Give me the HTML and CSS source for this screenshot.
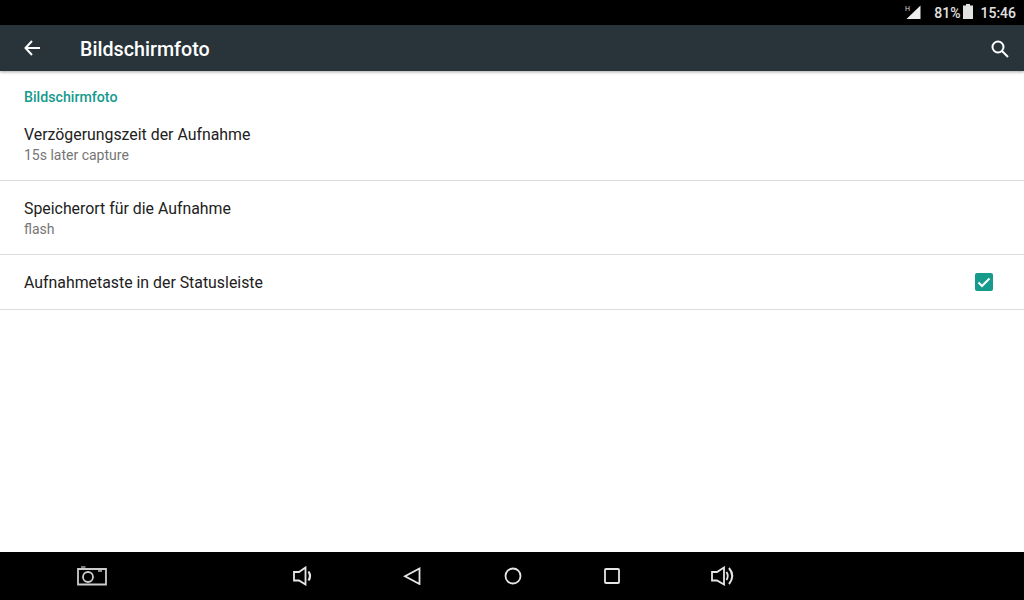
FILE: index.html
```html
<!DOCTYPE html>
<html lang="de">
<head>
<meta charset="utf-8">
<title>Bildschirmfoto</title>
<link rel="stylesheet" href="styles.css">
</head>
<body>
<div class="screen">
  <div class="statusbar">
    <svg class="sb-signal" width="18" height="16" viewBox="0 0 18 16">
      <text x="0" y="6.500" class="sb-h">H</text>
      <path d="M1.500 15 L15.500 1.500 V15 Z" fill="#eee"/>
    </svg>
    <span class="sb-text sb-pct">81%</span>
    <svg class="sb-batt" width="10" height="15" viewBox="0 0 10 15">
      <path d="M3 0h4v1.500h3V15H0V1.500h3z" fill="#e2e2e2"/>
    </svg>
    <span class="sb-text sb-time">15:46</span>
  </div>
  <header class="appbar">
    <svg class="ab-back" width="16" height="16" viewBox="0 0 16 16" fill="none" stroke="#fff" stroke-width="2">
      <path d="M16 8H1.500M8 1 1.500 8 8 15"/>
    </svg>
    <h1 class="ab-title">Bildschirmfoto</h1>
    <svg class="ab-search" width="18" height="18" viewBox="0 0 18 18" fill="none" stroke="#fff" stroke-width="2">
      <circle cx="7" cy="7" r="5.500"/>
      <path d="M11 11 17 17"/>
    </svg>
  </header>
  <main class="content">
    <div class="section">Bildschirmfoto</div>
    <div class="row row-first">
      <div class="row-title">Verzögerungszeit der Aufnahme</div>
      <div class="row-sub">15s later capture</div>
    </div>
    <div class="row">
      <div class="row-title">Speicherort für die Aufnahme</div>
      <div class="row-sub">flash</div>
    </div>
    <div class="row row-check">
      <div class="row-title">Aufnahmetaste in der Statusleiste</div>
      <svg class="check" width="18" height="18" viewBox="0 0 18 18">
        <rect width="18" height="18" rx="2" fill="#159a8c"/>
        <path d="M3.500 9.500 7 13l7.500-7.500" fill="none" stroke="#fff" stroke-width="2"/>
      </svg>
    </div>
  </main>
  <nav class="navbar">
    <svg class="nav-cam" width="30" height="20" viewBox="0 0 30 20" fill="none" stroke="#ccc" stroke-width="1.800">
      <path d="M1 3H29V18.500H1Z"/>
      <path d="M4 1H8.500" stroke-width="1.200"/>
      <circle cx="11" cy="11" r="5"/>
      <path d="M21 5H25" stroke-width="1.400"/>
    </svg>
    <svg class="nav-voldown" width="20" height="20" viewBox="0 0 20 20" fill="none" stroke="#e6e6e6" stroke-width="1.800">
      <path d="M1 6H6L12.500 1.500V18.500L6 14.500H1Z"/>
      <path d="M15.500 5.500Q18.500 10 15.500 14.500" stroke-width="2.200"/>
    </svg>
    <svg class="nav-back" width="18" height="18" viewBox="0 0 18 18" fill="none" stroke="#e6e6e6" stroke-width="1.800">
      <path d="M16.500 1.500V17L2 9.200Z"/>
    </svg>
    <svg class="nav-home" width="18" height="18" viewBox="0 0 18 18" fill="none" stroke="#e6e6e6" stroke-width="1.800">
      <circle cx="9" cy="9" r="7.500"/>
    </svg>
    <svg class="nav-recent" width="16" height="16" viewBox="0 0 16 16" fill="none" stroke="#e6e6e6" stroke-width="1.800">
      <rect x="1" y="1" width="14" height="14" rx="1"/>
    </svg>
    <svg class="nav-volup" width="24" height="20" viewBox="0 0 24 20" fill="none" stroke="#e6e6e6" stroke-width="1.800">
      <path d="M1 6H6L13 1.500V18.500L6 14.500H1Z"/>
      <path d="M15.500 6Q18 10 15.500 14"/>
      <path d="M18 2Q24.500 10 18 18" stroke-width="2"/>
    </svg>
  </nav>
</div>
</body>
</html>
```
FILE: styles.css
```css
* { box-sizing: border-box; }
html, body { margin: 0; padding: 0; }
body { width: 1024px; height: 600px; overflow: hidden; font-family: Roboto, "Liberation Sans", sans-serif; background: #fff; }
.screen { width: 1024px; height: 600px; display: flex; flex-direction: column; }

.statusbar { height: 25px; flex: none; background: #000; display: flex; align-items: center; justify-content: flex-end; padding-right: 8px; color: #e2e2e2; }
.sb-signal { margin-right: 11px; margin-top: -2px; }
.sb-h { font: 7px Roboto, sans-serif; fill: #ddd; }
.sb-text { font-size: 14px; font-weight: 500; }
.sb-batt { margin: -2px 7px 0 3px; }

.appbar { height: 46px; flex: none; background: #28343a; display: flex; align-items: center; padding: 0 15px 0 24px; box-shadow: 0 1px 3px rgba(0,0,0,.35); position: relative; }
.ab-title { margin: 2px 0 0 40px; flex: 1; font-size: 19.700px; font-weight: 500; color: #fff; }
.ab-search { margin-top: 1px; }

.content { flex: 1; background: #fff; }
.section { padding: 19px 24px 0; height: 34px; font-size: 14.200px; line-height: 15px; font-weight: 500; color: #159a8c; }
.row { height: 74px; padding: 18px 24px 0; border-bottom: 1px solid #dcdcdc; }
.row-first { height: 76px; padding-top: 20px; }
.row-check { height: 55px; display: flex; justify-content: space-between; align-items: center; padding: 0 31px 0 24px; }
.row-check .row-title { margin-top: 2px; }
.row-title { font-size: 15.870px; line-height: 20px; color: #212121; }
.row-sub { font-size: 14px; line-height: 20px; margin-top: 0; color: #757575; }

.navbar { height: 48px; flex: none; background: #000; display: flex; align-items: center; padding-left: 77px; }
.nav-cam { margin-right: 186px; }
.nav-voldown { margin-right: 90px; }
.nav-back { margin-right: 83px; }
.nav-home { margin-right: 82px; }
.nav-recent { margin-right: 91px; }
```
